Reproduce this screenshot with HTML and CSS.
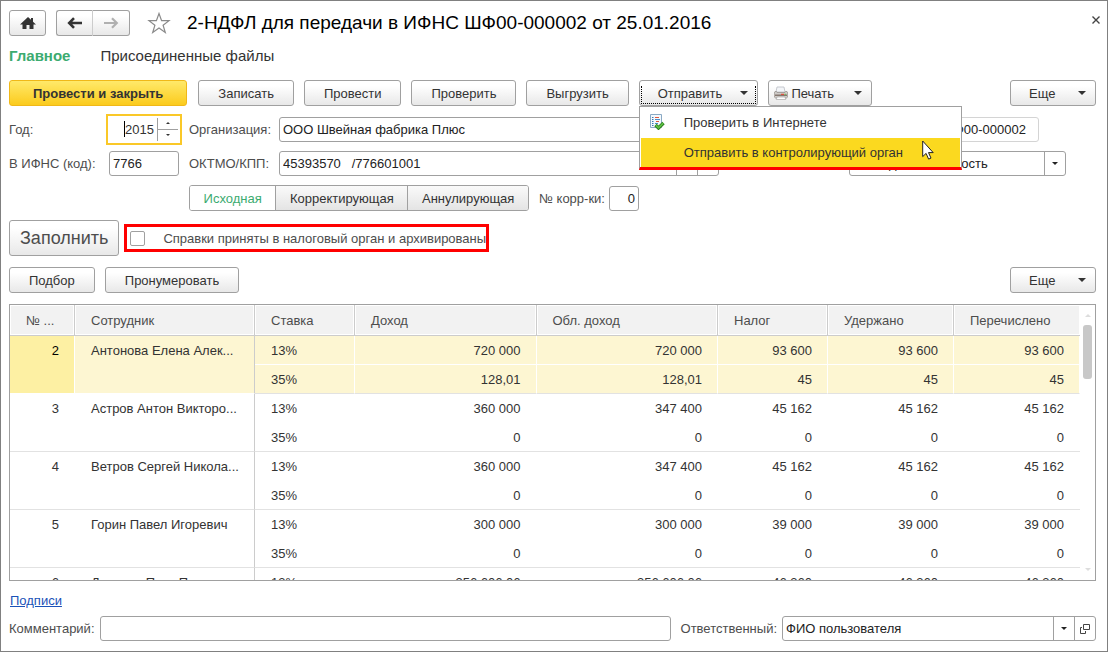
FILE: index.html
```html
<!DOCTYPE html>
<html lang="ru">
<head>
  <meta charset="UTF-8" />
  <meta name="viewport" content="width=device-width, initial-scale=1.0"/>
  <title>2-НДФЛ для передачи в ИФНС</title>
  <link rel="stylesheet" href="styles.css">
</head>
<body>
  <div class="window">
    <header class="titlebar">
      <button class="btn btn-home" aria-label="Начальная страница">
        <svg width="16" height="13" viewBox="0 0 16 13"><path d="M8 0 0 7.500h2.500V12H6.500V8h3v4h4V7.500H16L13 4.700V1h-2v1.800z" fill="#333"/></svg>
      </button>
      <div class="history">
        <button class="btn" aria-label="Назад">
          <svg width="16" height="12" viewBox="0 0 16 12"><path d="M15 6H2.500M7 1.200 2.200 6 7 10.800" fill="none" stroke="#333" stroke-width="2.600"/></svg>
        </button>
        <button class="btn" aria-label="Вперед">
          <svg width="16" height="12" viewBox="0 0 16 12"><path d="M1 6h12.500M9 1.200 13.800 6 9 10.800" fill="none" stroke="#b0b0b0" stroke-width="2.200"/></svg>
        </button>
      </div>
      <button class="star" aria-label="Избранное">
        <svg width="24" height="22" viewBox="0 0 24 22"><path d="M12 1.500l2.600 7.200h7.400l-5.900 4.500 2.200 7.300-6.300-4.400-6.300 4.400 2.200-7.300L2 8.700h7.400z" fill="#fff" stroke="#8a8a8a" stroke-width="1.200"/></svg>
      </button>
      <h1>2-НДФЛ для передачи в ИФНС ШФ00-000002 от 25.01.2016</h1>
      <button class="close" aria-label="Закрыть">
        <svg width="8" height="8" viewBox="0 0 8 8"><path d="M.5.5l7 7M7.500.5l-7 7" stroke="#444" stroke-width="1.400"/></svg>
      </button>
    </header>

    <nav class="tabs">
      <a href="#" class="active">Главное</a>
      <a href="#">Присоединенные файлы</a>
    </nav>

    <div class="toolbar">
      <button class="btn btn-primary">Провести и закрыть</button>
      <button class="btn">Записать</button>
      <button class="btn">Провести</button>
      <button class="btn">Проверить</button>
      <button class="btn">Выгрузить</button>
      <div class="dropdown">
        <button class="btn btn-menu focused" aria-expanded="true">Отправить <span class="arrow"></span></button>
        <ul class="menu">
          <li>
            <button>
              <svg width="16" height="16" viewBox="0 0 16 16">
                <path d="M1.500.5h11v13h-11z" fill="#f4f9fd" stroke="#8aa9c4"/>
                <path d="M3 3.500h1.500M3 5.500h1.500M3 7.500h1.500M3 9.500h1.500M3 11.500h1.500" stroke="#3b78b5"/>
                <path d="M6 3.500h4M7 7.500h3" stroke="#e0583c"/>
                <path d="M6 5.500h5M6 9.500h3M6 11.500h2" stroke="#4b8fc9"/>
                <path d="M6.500 11l3 3 5-5" fill="none" stroke="#2c7d1e" stroke-width="3.400"/>
                <path d="M6.800 11.200l2.700 2.600 4.700-4.600" fill="none" stroke="#5cc043" stroke-width="1.800"/>
              </svg>
              Проверить в Интернете
            </button>
          </li>
          <li><button class="selected">Отправить в контролирующий орган</button></li>
        </ul>
        <svg class="cursor" width="12" height="20" viewBox="0 0 12 20"><path d="M.7 1v15.600l3.400-3.200 2.500 5.700 2.400-1-2.500-5.500h4.700z" fill="#fff" stroke="#222"/></svg>
      </div>
      <button class="btn btn-menu btn-print">
        <svg width="14" height="14" viewBox="0 0 14 14">
          <path d="M3 1h7l1 5H2z" fill="#f3f5f8" stroke="#b9bdc4" stroke-width=".8"/>
          <path d="M1 5.500h1.500l.5 1h8l.5-1H13l.7 1.500v4l-1.200 1h-11L.3 11V7z" fill="#cfccc9" stroke="#8f8984" stroke-width=".7"/>
          <path d="M1 8.500h12v1.500H1z" fill="#85776f"/>
          <path d="M7 8.300h3" stroke="#e8402a"/>
          <path d="M10.500 8.300H12" stroke="#6ac04a"/>
          <path d="M3 11h8l.7 2.500H2.300z" fill="#fff" stroke="#a7a7a7" stroke-width=".7"/>
        </svg>
        Печать <span class="arrow"></span>
      </button>
      <button class="btn btn-menu btn-more">Еще <span class="arrow"></span></button>
    </div>

    <div class="form">
      <div class="form-row">
        <label class="label-first" for="year">Год:</label>
        <div class="year">
          <input id="year" type="text" value="2015">
          <div class="spin">
            <button aria-label="Больше"><span class="arrow arrow-tiny arrow-up"></span></button>
            <button aria-label="Меньше"><span class="arrow arrow-tiny"></span></button>
          </div>
        </div>
        <label class="label-second" for="org">Организация:</label>
        <input id="org" class="field field-org" type="text" value="ООО Швейная фабрика Плюс">
        <input class="field field-number" type="text" value="ШФ00-000002" aria-label="Номер">
      </div>

      <div class="form-row">
        <label class="label-first" for="ifns">В ИФНС (код):</label>
        <input id="ifns" class="field field-ifns" type="text" value="7766">
        <label class="label-second" for="oktmo">ОКТМО/КПП:</label>
        <div class="combo combo-oktmo">
          <input id="oktmo" type="text" value="45393570   /776601001">
          <button aria-label="Выбрать"><span class="arrow arrow-small"></span></button>
          <button aria-label="Открыть"><svg width="10" height="10" viewBox="0 0 10 10"><path d="M3.500.5h6v5h-6zM2 3.500H.5v6h5V7" fill="none" stroke="#444"/></svg></button>
        </div>
        <div class="combo combo-kind">
          <select aria-label="Вид справок"><option>Ежегодная отчетность</option></select>
          <span class="combo-arrow"><span class="arrow arrow-small"></span></span>
        </div>
      </div>

      <div class="form-row form-row-type">
        <div class="segmented">
          <button class="on">Исходная</button>
          <button>Корректирующая</button>
          <button>Аннулирующая</button>
        </div>
        <label for="corr">№ корр-ки:</label>
        <input id="corr" class="field field-corr" type="text" value="0">
      </div>
    </div>

    <div class="fill-row">
      <button class="btn btn-fill">Заполнить</button>
      <label class="accepted"><input type="checkbox"> Справки приняты в налоговый орган и архивированы</label>
    </div>

    <div class="toolbar toolbar-list">
      <button class="btn">Подбор</button>
      <button class="btn">Пронумеровать</button>
      <button class="btn btn-menu btn-more">Еще <span class="arrow"></span></button>
    </div>

    <div class="list">
      <div class="list-body">
        <table>
          <colgroup>
            <col class="col-num"><col class="col-name"><col class="col-rate"><col><col><col class="col-tax"><col class="col-held"><col class="col-paid">
          </colgroup>
          <thead>
            <tr><th>№ ...</th><th>Сотрудник</th><th>Ставка</th><th>Доход</th><th>Обл. доход</th><th>Налог</th><th>Удержано</th><th>Перечислено</th></tr>
          </thead>
          <tbody class="current">
            <tr><td rowspan="2" class="num">2</td><td rowspan="2" class="name">Антонова Елена Алек...</td><td>13%</td><td>720 000</td><td>720 000</td><td>93 600</td><td>93 600</td><td>93 600</td></tr>
            <tr><td>35%</td><td>128,01</td><td>128,01</td><td>45</td><td>45</td><td>45</td></tr>
          </tbody>
          <tbody>
            <tr><td rowspan="2" class="num">3</td><td rowspan="2" class="name">Астров Антон Викторо...</td><td>13%</td><td>360 000</td><td>347 400</td><td>45 162</td><td>45 162</td><td>45 162</td></tr>
            <tr><td>35%</td><td>0</td><td>0</td><td>0</td><td>0</td><td>0</td></tr>
          </tbody>
          <tbody>
            <tr><td rowspan="2" class="num">4</td><td rowspan="2" class="name">Ветров Сергей Никола...</td><td>13%</td><td>360 000</td><td>347 400</td><td>45 162</td><td>45 162</td><td>45 162</td></tr>
            <tr><td>35%</td><td>0</td><td>0</td><td>0</td><td>0</td><td>0</td></tr>
          </tbody>
          <tbody>
            <tr><td rowspan="2" class="num">5</td><td rowspan="2" class="name">Горин Павел Игоревич</td><td>13%</td><td>300 000</td><td>300 000</td><td>39 000</td><td>39 000</td><td>39 000</td></tr>
            <tr><td>35%</td><td>0</td><td>0</td><td>0</td><td>0</td><td>0</td></tr>
          </tbody>
          <tbody>
            <tr><td rowspan="2" class="num">6</td><td rowspan="2" class="name">Денисов Петр Павл...</td><td>13%</td><td>356 606,06</td><td>356 606,06</td><td>46 360</td><td>46 360</td><td>46 360</td></tr>
            <tr><td>35%</td><td>0</td><td>0</td><td>0</td><td>0</td><td>0</td></tr>
          </tbody>
        </table>
      </div>
      <div class="scrollbar">
        <span class="arrow arrow-small arrow-up"></span>
        <div class="thumb"></div>
        <span class="arrow arrow-small"></span>
      </div>
    </div>

    <a href="#" class="signatures">Подписи</a>

    <footer class="footer">
      <label for="comment">Комментарий:</label>
      <input id="comment" class="field field-comment" type="text">
      <label for="user">Ответственный:</label>
      <div class="combo combo-user">
        <input id="user" type="text" value="ФИО пользователя">
        <button aria-label="Выбрать"><span class="arrow arrow-small"></span></button>
        <button aria-label="Открыть"><svg width="10" height="10" viewBox="0 0 10 10"><path d="M3.500.5h6v5h-6zM2 3.500H.5v6h5V7" fill="none" stroke="#444"/></svg></button>
      </div>
    </footer>
  </div>
</body>
</html>
```
FILE: styles.css
```css
* {
  box-sizing: border-box;
}

body {
  margin: 0;
  font-family: "Liberation Sans", Arial, sans-serif;
  font-size: 13px;
  color: #333;
  background: #fff;
}

button,
input,
select {
  font: inherit;
  color: inherit;
  margin: 0;
}

button {
  cursor: pointer;
}

.window {
  display: flex;
  flex-direction: column;
  height: 100vh;
  min-height: 500px;
  padding: 9px 11px 10px 8px;
  border: 1px solid #808080;
}

.btn {
  display: flex;
  align-items: center;
  justify-content: center;
  height: 26px;
  padding: 0 19px;
  border: 1px solid #a0a0a0;
  border-radius: 3px;
  background: linear-gradient(#fff 20%, #e8e8e8);
  white-space: nowrap;
}

/* title */
.titlebar {
  display: flex;
  align-items: center;
  height: 26px;
}

.btn-home {
  width: 37px;
  padding: 0;
}

.history {
  display: flex;
  margin-left: 10px;
}

.history .btn {
  width: 37px;
  padding: 0;
}

.history .btn:first-child {
  border-radius: 3px 0 0 3px;
  border-right-color: #ccc;
}

.history .btn:last-child {
  border-left: none;
  border-radius: 0 3px 3px 0;
}

.star,
.close {
  display: flex;
  padding: 0;
  border: none;
  background: none;
}

.star {
  margin-left: 17px;
}

h1 {
  margin: 0 0 0 16px;
  font-size: 19px;
  font-weight: normal;
  color: #000;
  white-space: nowrap;
}

.close {
  margin: 0 -4px 6px auto;
}

.tabs {
  display: flex;
  gap: 30px;
  margin-top: 11px;
  font-size: 15px;
  line-height: 18px;
}

.tabs a {
  color: #333;
  text-decoration: none;
}

.tabs .active {
  font-weight: bold;
  color: #3cab70;
}

/* command bar */
.toolbar {
  display: flex;
  gap: 10px;
  margin-top: 15px;
}

.btn-primary {
  margin-right: 1px;
  padding: 0 23px;
  border-color: #f0b818;
  background: linear-gradient(#ffe96a, #fbcb1d);
  font-weight: bold;
}

.btn-menu {
  justify-content: space-between;
  padding: 0 9px 0 18px;
}

.arrow {
  border: 4px solid transparent;
  border-top-color: currentColor;
  border-bottom: none;
}

.arrow-small {
  border-width: 3px;
}

.arrow-tiny {
  border-width: 2px;
}

.arrow-up {
  border-top: none;
  border-bottom: 3px solid currentColor;
}

.arrow-tiny.arrow-up {
  border-bottom-width: 2px;
}

.dropdown {
  position: relative;
}

.focused {
  width: 119px;
}

/* focus mark inside the opened button */
.focused::after {
  content: "";
  position: absolute;
  inset: 6px 2px 2px;
  border: 1px dotted #000;
  border-top: none;
}

.btn-print {
  width: 104px;
  padding-left: 5px;
}

.btn-print .arrow {
  margin-left: 16px;
}

.btn-more {
  width: 86px;
  margin-left: auto;
}

.menu {
  position: absolute;
  z-index: 1;
  top: 26px;
  left: 0;
  width: 323px;
  margin: 0;
  padding: 1px 1px 0;
  list-style: none;
  border: 1px solid #a0a0a0;
  border-bottom: 3px solid #f00;
  background: #fff;
}

.menu button {
  display: flex;
  align-items: center;
  width: 100%;
  height: 30px;
  padding: 0 0 2px 8px;
  border: none;
  background: none;
  gap: 19px;
}

.menu .selected {
  height: 29px;
  padding: 0 0 0 43px;
  background: #fbd91f;
}

.cursor {
  position: absolute;
  z-index: 2;
  top: 60px;
  left: 283px;
}

/* form fields */
.form {
  margin-top: 6px;
}

.form-row {
  display: flex;
  align-items: center;
  height: 34px;
}

.form label,
.footer label {
  flex: none;
  color: #4d4d4d;
  white-space: nowrap;
}

.field,
.combo {
  height: 25px;
  border: 1px solid #a0a0a0;
  border-radius: 3px;
  background: #fff;
  color: #222;
}

.field {
  padding: 0 3px;
}

.form .label-first {
  width: 100px;
}

.form .label-second {
  width: 90px;
  margin-left: 10px;
}

.year {
  display: flex;
  justify-content: flex-end;
  width: 76px;
  height: 31px;
  margin: 0 -3px;
  padding: 2px;
  border: 2px solid #fac828;
}

.year input {
  align-self: center;
  width: 33px;
  height: 16px;
  padding: 0 3px 0 0;
  border: none;
  border-left: 1px solid #000;
  outline: none;
  text-align: right;
}

.spin {
  display: flex;
  flex-direction: column;
  width: 21px;
  border-left: 1px solid #a0a0a0;
}

.spin button {
  display: flex;
  flex: 1;
  align-items: center;
  justify-content: center;
  padding: 0;
  border: none;
  background: none;
}

.spin button:first-child {
  border-bottom: 1px solid #a0a0a0;
}

.field-ifns {
  width: 70px;
}

.field-org,
.combo-oktmo {
  width: 440px;
}

.field-number {
  width: 110px;
  margin-left: 210px;
  padding-right: 12px;
  border-color: #d4d4d4;
  text-align: right;
}

.combo {
  display: flex;
  overflow: hidden;
}

.combo input,
.combo select {
  flex: 1;
  min-width: 0;
  padding: 0 3px;
  border: none;
  background: none;
  appearance: none;
}

.combo button,
.combo-arrow {
  display: flex;
  align-items: center;
  justify-content: center;
  width: 21px;
  padding: 0;
  border: none;
  border-left: 1px solid #a0a0a0;
  background: none;
}

.combo-kind {
  width: 217px;
  margin-left: 130px;
}

.form-row-type {
  gap: 10px;
  height: 36px;
  padding-left: 180px;
}

.segmented {
  display: flex;
  width: 340px;
  height: 26px;
  border: 1px solid #a0a0a0;
  border-radius: 3px;
  overflow: hidden;
}

.segmented button {
  flex: auto;
  padding: 0 10px;
  border: none;
  border-left: 1px solid #a0a0a0;
  background: linear-gradient(#fafafa, #e4e4e4);
}

.segmented .on {
  border-left: none;
  background: #fff;
  color: #3cab70;
}

.field-corr {
  width: 30px;
  margin-left: -6px;
  text-align: right;
}

.fill-row {
  display: flex;
  align-items: center;
  gap: 5px;
  margin-top: 4px;
}

.btn-fill {
  height: 36px;
  padding: 0 10px;
  font-size: 18px;
  color: #4d4d4d;
}

.accepted {
  display: flex;
  align-items: center;
  gap: 18px;
  height: 28px;
  padding: 0 0 0 3px;
  border: 3px solid #f00;
  color: #4d4d4d;
  white-space: nowrap;
}

.accepted input {
  width: 15px;
  height: 15px;
  margin: 0;
  border: 1px solid #a0a0a0;
  border-radius: 2px;
  appearance: none;
}

.toolbar-list {
  margin-top: 11px;
}

/* employees list */
.list {
  display: flex;
  flex: 1;
  min-height: 0;
  margin-top: 11px;
  border: 1px solid #a0a0a0;
  overflow: hidden;
}

.list-body {
  flex: 1;
  overflow: hidden;
}

table {
  width: 100%;
  table-layout: fixed;
  border-collapse: separate;
  border-spacing: 0;
}

.col-num { width: 65px; }
.col-name { width: 180px; }
.col-rate { width: 100px; }
.col-tax { width: 110px; }
.col-held { width: 126px; }
.col-paid { width: 126px; }

th {
  height: 31px;
  padding: 0 16px;
  border-right: 1px solid #ccc;
  border-bottom: 1px solid #ccc;
  background: #f2f2f2;
  box-shadow: inset 0 0 0 1px #fff;
  font-weight: normal;
  color: #4d4d4d;
  text-align: left;
  white-space: nowrap;
}

th:last-child {
  border-right: none;
}

td {
  height: 29px;
  padding: 0 16px;
  text-align: right;
  white-space: nowrap;
}

td.num,
td.name {
  padding-top: 7px;
  border-bottom: 1px solid #e2e2e2;
  vertical-align: top;
}

td.name {
  border-right: 1px solid #ccc;
  text-align: left;
}

tr:first-child td:nth-child(3),
tr:last-child td:first-child {
  text-align: left;
}

tr:last-child td {
  border-bottom: 1px solid #e2e2e2;
}

.current td {
  padding-right: 15px;
  border-right: 1px solid #fff;
  background: #fdf6d2;
}

.current tr:first-child td {
  border-bottom: 1px solid #fff;
}

.current tr:first-child .num {
  background: #fdf0a3;
  color: #000;
}

.current tr:first-child .name {
  border-right-color: #ccc;
}

.scrollbar {
  display: flex;
  flex-direction: column;
  align-items: center;
  width: 15px;
  padding: 9px 0;
  color: #ddd;
}

.thumb {
  width: 9px;
  height: 54px;
  margin: 8px 0 auto;
  border-radius: 3px;
  background: #c8c8c8;
}

.signatures {
  align-self: flex-start;
  margin: 12px 0 7px 1px;
  line-height: 16px;
  color: #1a52b8;
}

.footer {
  display: flex;
  align-items: center;
  gap: 5px;
}

.field-comment {
  flex: 1;
  min-width: 0;
  margin-right: 5px;
}

.combo-user {
  width: 314px;
}
```
